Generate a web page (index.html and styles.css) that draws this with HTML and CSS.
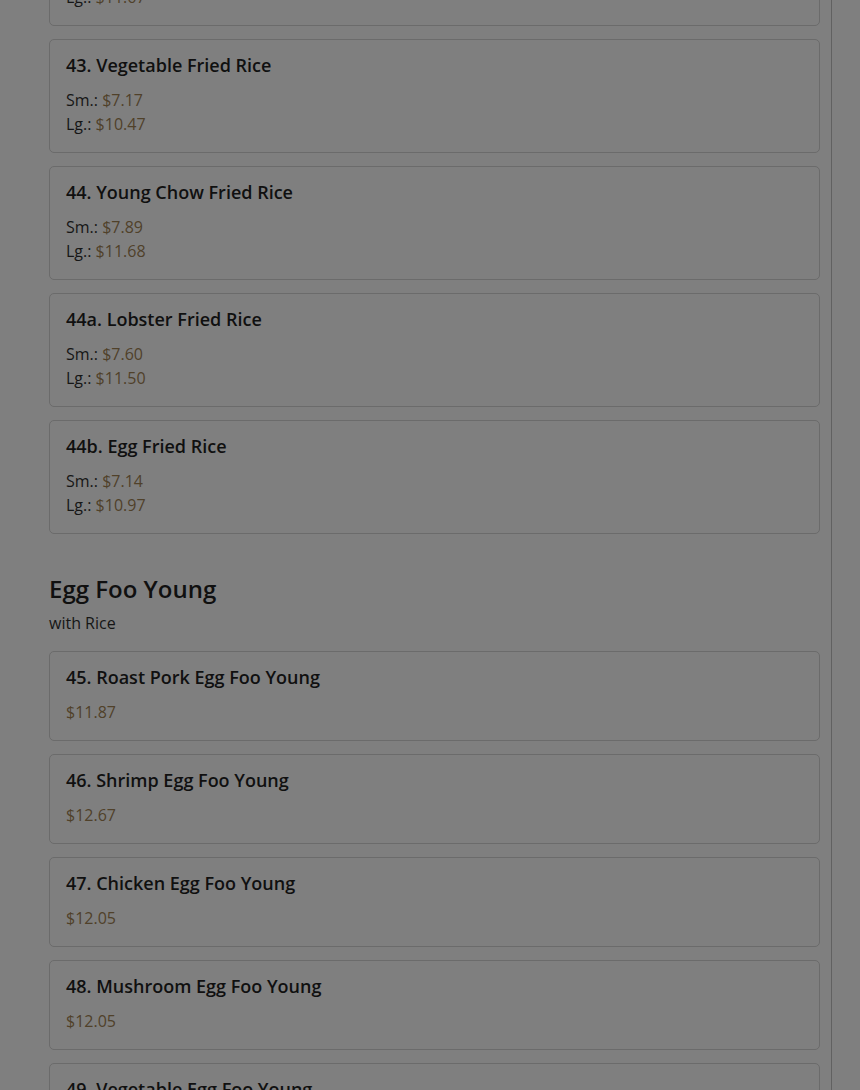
FILE: index.html
```html
<!DOCTYPE html>
<html lang="en">
<head>
<meta charset="utf-8">
<title>Menu</title>
<link rel="stylesheet" href="styles.css">
</head>
<body>
<div class="page">
  <main class="menu">
    <div class="item item-cut">
      <div class="price-line">Lg.: <span class="price">$11.67</span></div>
    </div>
    <div class="item">
      <h3 class="item-title">43. Vegetable Fried Rice</h3>
      <div class="price-line">Sm.: <span class="price">$7.17</span></div>
      <div class="price-line">Lg.: <span class="price">$10.47</span></div>
    </div>
    <div class="item">
      <h3 class="item-title">44. Young Chow Fried Rice</h3>
      <div class="price-line">Sm.: <span class="price">$7.89</span></div>
      <div class="price-line">Lg.: <span class="price">$11.68</span></div>
    </div>
    <div class="item">
      <h3 class="item-title">44a. Lobster Fried Rice</h3>
      <div class="price-line">Sm.: <span class="price">$7.60</span></div>
      <div class="price-line">Lg.: <span class="price">$11.50</span></div>
    </div>
    <div class="item">
      <h3 class="item-title">44b. Egg Fried Rice</h3>
      <div class="price-line">Sm.: <span class="price">$7.14</span></div>
      <div class="price-line">Lg.: <span class="price">$10.97</span></div>
    </div>

    <section class="category">
      <h2 class="category-title">Egg Foo Young</h2>
      <p class="category-note">with Rice</p>
      <div class="item">
        <h3 class="item-title">45. Roast Pork Egg Foo Young</h3>
        <div class="price-line"><span class="price">$11.87</span></div>
      </div>
      <div class="item">
        <h3 class="item-title">46. Shrimp Egg Foo Young</h3>
        <div class="price-line"><span class="price">$12.67</span></div>
      </div>
      <div class="item">
        <h3 class="item-title">47. Chicken Egg Foo Young</h3>
        <div class="price-line"><span class="price">$12.05</span></div>
      </div>
      <div class="item">
        <h3 class="item-title">48. Mushroom Egg Foo Young</h3>
        <div class="price-line"><span class="price">$12.05</span></div>
      </div>
      <div class="item">
        <h3 class="item-title">49. Vegetable Egg Foo Young</h3>
        <div class="price-line"><span class="price">$12.05</span></div>
      </div>
    </section>
  </main>
</div>
</body>
</html>
```

FILE: styles.css
```css
html, body {
  margin: 0;
  padding: 0;
  background: #7f7f7f;
  overflow: hidden;
}

body {
  font-family: "Open Sans", "Noto Sans", sans-serif;
  color: #141414;
}

.page {
  width: 832px;
  height: 1090px;
  border-right: 1px solid #616161;
  box-sizing: border-box;
  overflow: hidden;
}

.menu {
  display: flex;
  flex-direction: column;
  gap: 13px;
  padding: 0 11px 0 49px;
  margin-top: -32px;
}

.item {
  border: 1px solid #6b6b6b;
  border-radius: 5px;
  padding: 16px;
  box-sizing: border-box;
}

.item-title {
  margin: 0 0 13px;
  font-size: 18px;
  line-height: 19px;
  font-weight: 600;
  color: #101010;
}

.price-line {
  font-size: 16px;
  line-height: 24px;
  color: #161616;
}

.price {
  color: #50412a;
}

.category {
  display: flex;
  flex-direction: column;
  gap: 13px;
  margin-top: 27px;
}

.category-title {
  margin: 0;
  font-size: 24px;
  line-height: 29px;
  font-weight: 600;
  color: #101010;
}

.category-note {
  margin: -5px 0 3px;
  font-size: 16px;
  line-height: 24px;
  color: #161616;
}
```
